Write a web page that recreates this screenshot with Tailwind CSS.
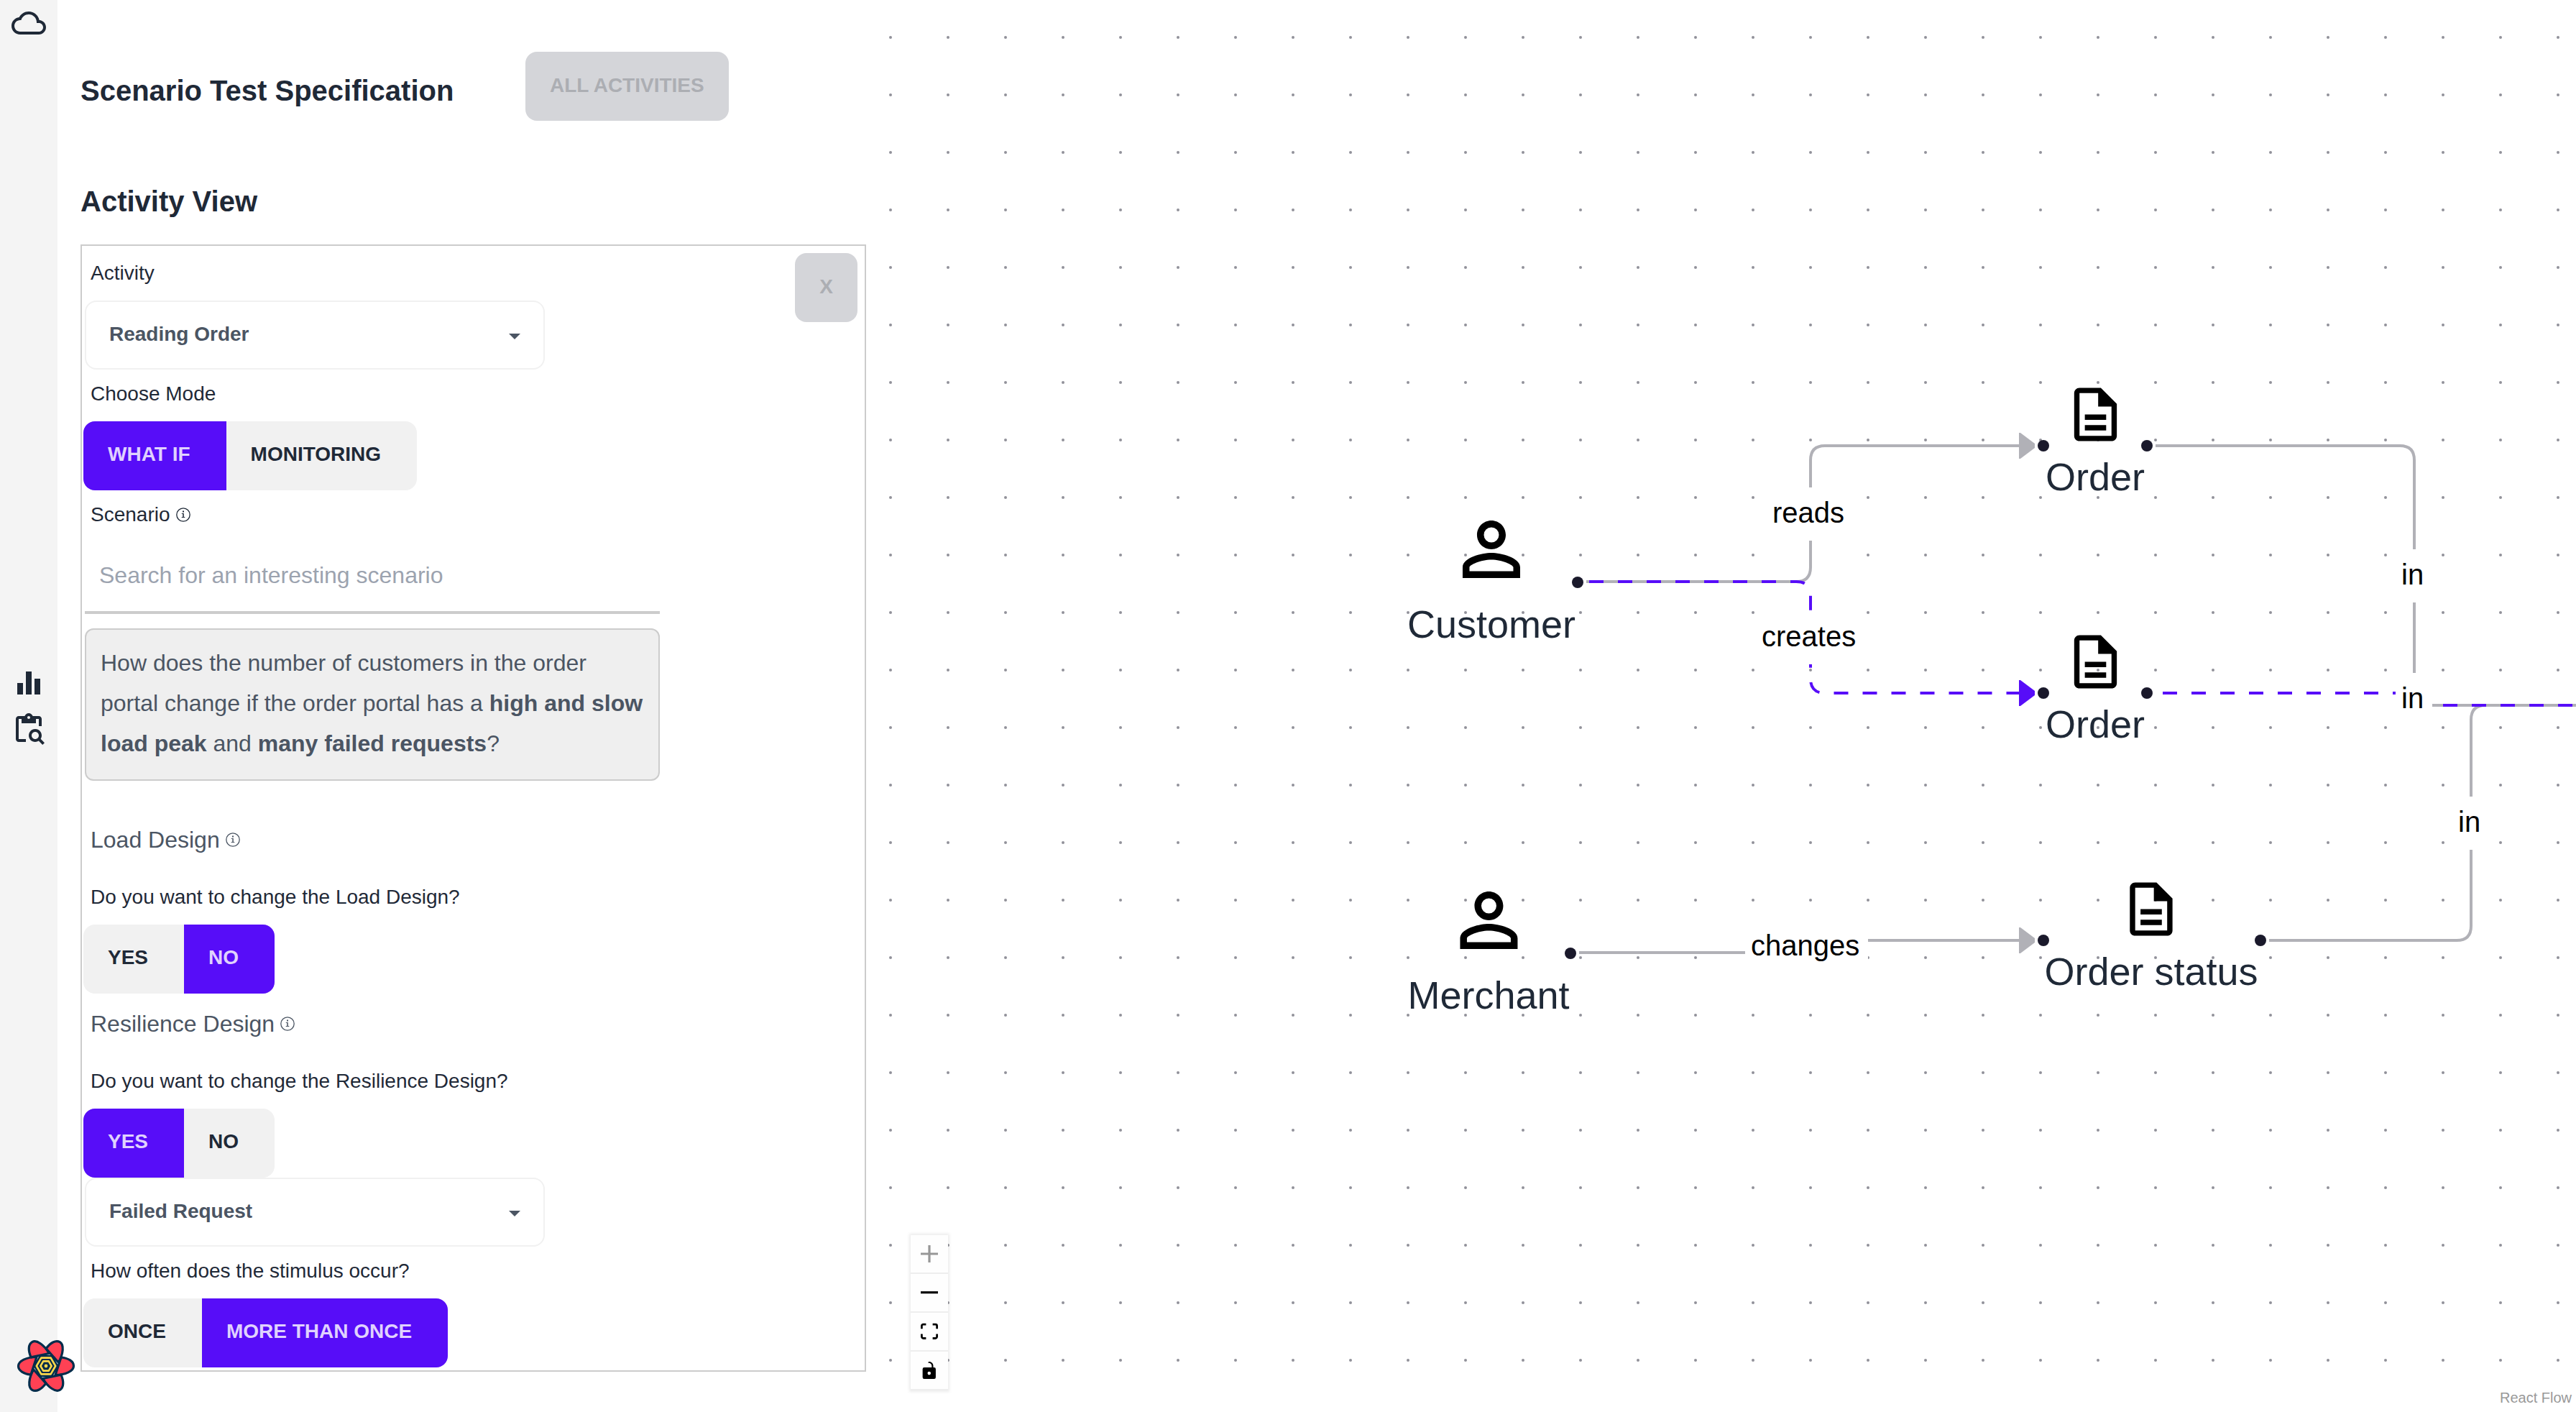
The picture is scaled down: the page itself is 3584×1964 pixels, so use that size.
<!DOCTYPE html>
<html lang="en">
<head>
<meta charset="utf-8">
<title>Scenario Test Specification</title>
<script src="https://cdn.jsdelivr.net/npm/@tailwindcss/browser@4"></script>
</head>
<body class="bg-white font-['Liberation_Sans',Arial,sans-serif] text-[#1f2937]">
<svg class="hidden" aria-hidden="true">
  <symbol id="info" viewBox="0 0 20 20"><circle cx="10" cy="10" r="9.200" fill="none" stroke="currentColor" stroke-width="1.300"/><path fill="currentColor" d="M9 4.600h2v1.900H9zM7.800 7.900h3v5.200h1.500v1H7.700v-1h1.600V8.900H7.800z"/></symbol>
  <symbol id="person" viewBox="0 0 24 24"><path d="M12 5.900a2.100 2.100 0 110 4.200 2.100 2.100 0 010-4.200m0 9c2.970 0 6.100 1.460 6.100 2.100v1.100H5.900V17c0-.64 3.130-2.100 6.100-2.100M12 4C9.790 4 8 5.790 8 8s1.790 4 4 4 4-1.790 4-4-1.790-4-4-4zm0 9c-2.670 0-8 1.340-8 4v3h16v-3c0-2.660-5.330-4-8-4z"/></symbol>
  <symbol id="document" viewBox="0 0 24 24"><path d="M8 16h8v2H8zm0-4h8v2H8zm6-10H6c-1.100 0-2 .9-2 2v16c0 1.100.89 2 1.990 2H18c1.100 0 2-.9 2-2V8l-6-6zm4 18H6V4h7v5h5v11z"/></symbol>
</svg>

<div class="relative flex min-h-screen">
  <nav class="flex w-20 shrink-0 flex-col items-center bg-[#f4f4f4]">
    <div class="flex-1 pt-2">
      <a href="#" aria-label="Home" class="block"><svg class="size-12" viewBox="0 0 24 24" fill="currentColor"><path d="M19.350 10.040C18.670 6.590 15.640 4 12 4 9.110 4 6.600 5.640 5.350 8.040 2.340 8.360 0 10.910 0 14c0 3.310 2.690 6 6 6h13c2.760 0 5-2.240 5-5 0-2.640-2.050-4.780-4.650-4.960zM19 18H6c-2.210 0-4-1.790-4-4s1.790-4 4-4h.71C7.370 7.690 9.480 6 12 6c3.040 0 5.500 2.460 5.500 5.500v.5H19c1.660 0 3 1.340 3 3s-1.340 3-3 3z"/></svg></a>
    </div>
    <div class="flex flex-col gap-4">
      <a href="#" aria-label="Monitoring"><svg class="size-12" viewBox="0 0 24 24" fill="currentColor"><path d="M4 12h4v8H4zM10 4h4v16h-4zM16 9h4v11h-4z"/></svg></a>
      <a href="#" aria-label="Specifications"><svg class="size-12" viewBox="0 0 24 24" fill="currentColor"><path d="M5 5h2v3h10V5h2v5h2V5c0-1.100-.9-2-2-2h-4.180C14.400 1.840 13.300 1 12 1s-2.400.84-2.820 2H5c-1.100 0-2 .9-2 2v14c0 1.100.9 2 2 2h5v-2H5V5zm7-2c.55 0 1 .45 1 1s-.45 1-1 1-1-.45-1-1 .45-1 1-1z"/><path d="M20.300 18.900c.4-.7.7-1.500.7-2.400 0-2.500-2-4.500-4.500-4.500S12 14 12 16.500s2 4.500 4.500 4.500c.9 0 1.700-.3 2.400-.7l2.700 2.700 1.400-1.400-2.700-2.700zm-3.800.1c-1.400 0-2.500-1.100-2.500-2.500s1.100-2.500 2.500-2.500 2.500 1.100 2.500 2.500-1.100 2.500-2.500 2.500z"/></svg></a>
    </div>
    <div class="flex-1 pb-2"></div>
  </nav>

  <section class="shrink-0 px-8 pt-[72px] pb-14">
    <header class="flex items-end">
      <h1 class="w-[619px] pb-3.5 text-[40px] leading-[56px] font-bold">Scenario Test Specification</h1>
      <button disabled class="h-24 rounded-2xl bg-[#d4d5d9] px-[34px] pb-0.5 text-[28px] font-bold text-[#acaeb3]">ALL ACTIVITIES</button>
    </header>
    <h2 class="mt-21 mb-8 text-[40px] leading-[56px] font-bold">Activity View</h2>

    <form class="relative w-[1093px] border-2 border-[#ccc] px-0.5 py-1">
      <button type="button" disabled class="absolute top-2.5 right-2.5 h-24 rounded-2xl bg-[#d4d5d9] px-[34px] pb-0.5 text-[28px] font-bold text-[#acaeb3]">X</button>

      <label for="activity" class="flex w-fit px-2.5 pt-3.5 pb-4.5 text-[28px] leading-10">Activity</label>
      <div class="relative ml-0.5 w-[640px]">
        <select id="activity" class="block h-24 w-full appearance-none rounded-2xl border-2 border-[#f1f1f1] bg-white px-8 pb-0.5 text-[28px] font-bold text-[#4b5563]"><option>Reading Order</option></select>
        <svg class="pointer-events-none absolute top-[46px] right-[34px] h-2 w-4" viewBox="0 0 16 8" fill="#4b5563"><path d="M0 0h16L8 8z"/></svg>
      </div>

      <fieldset>
        <legend class="px-2.5 pt-3.5 pb-4.5 text-[28px] leading-10">Choose Mode</legend>
        <div class="relative flex w-fit overflow-hidden rounded-2xl bg-[#f1f1f1] text-[28px] leading-[92px] font-bold">
          <label class="pr-[50px] pb-1 pl-[34px] has-checked:bg-[#570df8] has-checked:text-[#e0d2fe]"><input class="sr-only" type="radio" name="mode" checked>WHAT IF</label>
          <label class="pr-[50px] pb-1 pl-[34px] has-checked:bg-[#570df8] has-checked:text-[#e0d2fe]"><input class="sr-only" type="radio" name="mode">MONITORING</label>
        </div>
      </fieldset>

      <label for="scenario" class="flex w-fit items-center gap-2 px-2.5 pt-3.5 pb-4.5 text-[28px] leading-10">Scenario <svg class="size-5"><use href="#info"/></svg></label>
      <input id="scenario" type="text" placeholder="Search for an interesting scenario" class="ml-0.5 block h-[100px] w-[800px] border-b-4 border-[#ccc] px-5 pb-1 text-[32px] placeholder:text-[#9ca3af]">
      <p class="mt-5 ml-0.5 w-[800px] rounded-xl border-2 border-[#ccc] bg-[#efefef] pt-[18px] pr-4 pb-[22px] pl-5 text-[32px] leading-[56px] text-[#4b5563]">How does the number of customers in the order<br>portal change if the order portal has a <b>high and slow<br>load peak</b> and <b>many failed requests</b>?</p>

      <h3 class="mt-[58px] mb-[22px] flex items-center gap-2 px-2.5 text-[32px] leading-[48px] text-[#4b5563]">Load Design <svg class="size-5"><use href="#info"/></svg></h3>
      <fieldset>
        <legend class="px-2.5 pt-3.5 pb-4.5 text-[28px] leading-10">Do you want to change the Load Design?</legend>
        <div class="relative flex w-fit overflow-hidden rounded-2xl bg-[#f1f1f1] text-[28px] leading-[92px] font-bold">
          <label class="pr-[50px] pb-1 pl-[34px] has-checked:bg-[#570df8] has-checked:text-[#e0d2fe]"><input class="sr-only" type="radio" name="load">YES</label>
          <label class="pr-[50px] pb-1 pl-[34px] has-checked:bg-[#570df8] has-checked:text-[#e0d2fe]"><input class="sr-only" type="radio" name="load" checked>NO</label>
        </div>
      </fieldset>

      <h3 class="mt-[18px] mb-[22px] flex items-center gap-2 px-2.5 text-[32px] leading-[48px] text-[#4b5563]">Resilience Design <svg class="size-5"><use href="#info"/></svg></h3>
      <fieldset>
        <legend class="px-2.5 pt-3.5 pb-4.5 text-[28px] leading-10">Do you want to change the Resilience Design?</legend>
        <div class="relative flex w-fit overflow-hidden rounded-2xl bg-[#f1f1f1] text-[28px] leading-[92px] font-bold">
          <label class="pr-[50px] pb-1 pl-[34px] has-checked:bg-[#570df8] has-checked:text-[#e0d2fe]"><input class="sr-only" type="radio" name="resilience" checked>YES</label>
          <label class="pr-[50px] pb-1 pl-[34px] has-checked:bg-[#570df8] has-checked:text-[#e0d2fe]"><input class="sr-only" type="radio" name="resilience">NO</label>
        </div>
      </fieldset>
      <div class="relative ml-0.5 w-[640px]">
        <select aria-label="Stimulus" class="block h-24 w-full appearance-none rounded-2xl border-2 border-[#f1f1f1] bg-white px-8 pb-0.5 text-[28px] font-bold text-[#4b5563]"><option>Failed Request</option></select>
        <svg class="pointer-events-none absolute top-[46px] right-[34px] h-2 w-4" viewBox="0 0 16 8" fill="#4b5563"><path d="M0 0h16L8 8z"/></svg>
      </div>

      <fieldset>
        <legend class="px-2.5 pt-3.5 pb-4.5 text-[28px] leading-10">How often does the stimulus occur?</legend>
        <div class="relative flex w-fit overflow-hidden rounded-2xl bg-[#f1f1f1] text-[28px] leading-[92px] font-bold">
          <label class="pr-[50px] pb-1 pl-[34px] has-checked:bg-[#570df8] has-checked:text-[#e0d2fe]"><input class="sr-only" type="radio" name="often">ONCE</label>
          <label class="pr-[50px] pb-1 pl-[34px] has-checked:bg-[#570df8] has-checked:text-[#e0d2fe]"><input class="sr-only" type="radio" name="often" checked>MORE THAN ONCE</label>
        </div>
      </fieldset>
    </form>
  </section>

  <main class="relative min-w-0 flex-1 overflow-hidden">
    <svg class="absolute inset-0 size-full">
      <defs><pattern id="dots" x="-38" y="12" width="80" height="80" patternUnits="userSpaceOnUse"><circle cx="40" cy="40" r="2" fill="#91919a"/></pattern></defs>
      <rect width="100%" height="100%" fill="url(#dots)"/>
      <g fill="none" stroke="#b1b1b7" stroke-width="4">
        <path d="M970 809H1262Q1282 809 1282 789V640Q1282 620 1302 620H1574"/>
        <path d="M1762 620H2102Q2122 620 2122 640V961Q2122 981 2142 981H4000"/>
        <path d="M960 1325H1272V1308H1574"/>
        <path d="M1920 1308H2181Q2201 1308 2201 1288V1001Q2201 981 2221 981H4000"/>
      </g>
      <g fill="none" stroke="#570df8" stroke-width="4" stroke-dasharray="20 20">
        <path stroke-dashoffset="-4" d="M970 809H1262Q1282 809 1282 829V944Q1282 964 1302 964H1574"/>
        <path stroke-dashoffset="-10" d="M1762 964H2110"/>
        <path stroke-dashoffset="-14" d="M2148 981H4000"/>
      </g>
      <g fill="#b1b1b7"><path d="M1572 602h2l20 15v6l-20 15h-2z"/><path d="M1572 1290h2l20 15v6l-20 15h-2z"/></g>
      <path fill="#570df8" d="M1572 946h2l20 15v6l-20 15h-2z"/>
      <g fill="#1a192b">
        <circle cx="958" cy="810" r="8"/><circle cx="948" cy="1326" r="8"/>
        <circle cx="1606" cy="620" r="8"/><circle cx="1750" cy="620" r="8"/>
        <circle cx="1606" cy="964" r="8"/><circle cx="1750" cy="964" r="8"/>
        <circle cx="1606" cy="1308" r="8"/><circle cx="1908" cy="1308" r="8"/>
      </g>
    </svg>

    <div class="absolute top-[678px] left-[1221px] bg-white pr-3 pb-1 pl-2 text-[40px] leading-[70px] text-black">reads</div>
    <div class="absolute top-[850px] left-[1206px] bg-white pr-3 pb-1 pl-2 text-[40px] leading-[70px] text-black">creates</div>
    <div class="absolute top-[1280px] left-[1191px] bg-white pr-3 pb-1 pl-2 text-[40px] leading-[70px] text-black">changes</div>
    <div class="absolute top-[764px] left-[2096px] bg-white pr-3 pb-1 pl-2 text-[40px] leading-[70px] text-black">in</div>
    <div class="absolute top-[936px] left-[2096px] bg-white pr-3 pb-1 pl-2 text-[40px] leading-[70px] text-black">in</div>
    <div class="absolute top-[1108px] left-[2175px] bg-white pr-3 pb-1 pl-2 text-[40px] leading-[70px] text-black">in</div>

    <div class="absolute top-[704px] left-[838px] flex -translate-x-1/2 flex-col items-center gap-3 text-[54px] leading-[64px] whitespace-nowrap"><svg class="size-30 fill-black"><use href="#person"/></svg>Customer</div>
    <div class="absolute top-[1220px] left-[834px] flex -translate-x-1/2 flex-col items-center gap-3 text-[54px] leading-[64px] whitespace-nowrap"><svg class="size-30 fill-black"><use href="#person"/></svg>Merchant</div>
    <div class="absolute top-[532px] left-[1678px] flex -translate-x-1/2 flex-col items-center gap-2.5 text-[54px] leading-[64px] whitespace-nowrap"><svg class="size-[89px] fill-black"><use href="#document"/></svg>Order</div>
    <div class="absolute top-[876px] left-[1678px] flex -translate-x-1/2 flex-col items-center gap-2.5 text-[54px] leading-[64px] whitespace-nowrap"><svg class="size-[89px] fill-black"><use href="#document"/></svg>Order</div>
    <div class="absolute top-[1220px] left-[1756px] flex -translate-x-1/2 flex-col items-center gap-2.5 text-[54px] leading-[64px] whitespace-nowrap"><svg class="size-[89px] fill-black"><use href="#document"/></svg>Order status</div>

    <div class="absolute bottom-[30px] left-[30px] flex flex-col fill-black shadow-[0_0_4px_2px_rgba(0,0,0,0.08)]">
      <button disabled aria-label="Zoom in" class="flex h-[54px] w-[52px] items-center justify-center border-b-2 border-[#eee] bg-[#fefefe]"><svg class="size-6 opacity-40" viewBox="0 0 32 32"><path d="M32 18.133H18.133V32h-4.266V18.133H0v-4.266h13.867V0h4.266v13.867H32z"/></svg></button>
      <button aria-label="Zoom out" class="flex h-[54px] w-[52px] items-center justify-center border-b-2 border-[#eee] bg-[#fefefe]"><svg class="h-1 w-6" viewBox="0 0 32 5"><path d="M0 0h32v4.200H0z"/></svg></button>
      <button aria-label="Fit view" class="flex h-[54px] w-[52px] items-center justify-center border-b-2 border-[#eee] bg-[#fefefe]"><svg class="size-6" viewBox="0 0 32 30"><path d="M3.692 4.630c0-.53.4-.938.939-.938h5.215V0H4.708C2.130 0 0 2.054 0 4.630v5.216h3.692V4.631zM27.354 0h-5.200v3.692h5.170c.53 0 .984.4.984.939v5.215H32V4.631A4.624 4.624 0 0027.354 0zm.954 24.830c0 .532-.4.940-.939.940h-5.215v3.768h5.215c2.577 0 4.631-2.130 4.631-4.707v-5.139h-3.692v5.139zm-23.677.940c-.531 0-.939-.4-.939-.940v-5.138H0v5.139c0 2.577 2.130 4.707 4.708 4.707h5.138V25.770H4.631z"/></svg></button>
      <button aria-label="Toggle interactivity" class="flex h-[54px] w-[52px] items-center justify-center border-b-2 border-[#eee] bg-[#fefefe]"><svg class="size-6" viewBox="0 0 25 32"><path d="M21.333 10.667H19.810V7.619C19.810 3.429 16.380 0 12.190 0c-4.114 1.828-1.370 2.133.305 2.438 1.676.305 4.420 2.590 4.420 5.181v3.048H3.047A3.056 3.056 0 000 13.714v15.238A3.056 3.056 0 003.048 32h18.285a3.056 3.056 0 003.048-3.048V13.714a3.056 3.056 0 00-3.048-3.047zM12.190 24.533a3.056 3.056 0 01-3.047-3.047 3.056 3.056 0 013.047-3.048 3.056 3.056 0 013.048 3.048 3.056 3.056 0 01-3.048 3.047z"/></svg></button>
    </div>
    <a href="#" class="absolute right-0 bottom-0 bg-white/50 px-1.5 pt-1 pb-2 text-[20px] leading-6 text-[#999]">React Flow</a>
  </main>

  <button aria-label="Open React Query Devtools" class="absolute bottom-[22px] left-[22px]">
    <svg class="size-[84px]" viewBox="-42 -42 84 84">
      <g fill="#ff4154" stroke="#002c4b" stroke-width="3.200" stroke-linejoin="round">
        <path id="p" d="M21-12C31-11 38.500-6.500 38.500 0 38.500 7 27 12.500 13 12.500z"/>
        <use href="#p" transform="rotate(60)"/><use href="#p" transform="rotate(120)"/><use href="#p" transform="rotate(180)"/><use href="#p" transform="rotate(240)"/><use href="#p" transform="rotate(300)"/>
      </g>
      <path fill="#002c4b" d="M17.500 0L8.750 15.200H-8.750L-17.500 0-8.750-15.200H8.750z"/>
      <g fill="none" stroke="#ffd94c" stroke-width="2.600" stroke-linejoin="round"><path d="M13.200 0L6.600 11.400H-6.600L-13.200 0-6.600-11.400H6.600z"/><path d="M7.600 0L3.800 6.600H-3.800L-7.600 0-3.800-6.600H3.800z"/></g>
      <circle r="2.400" fill="#ffd94c"/>
    </svg>
  </button>
</div>
</body>
</html>
